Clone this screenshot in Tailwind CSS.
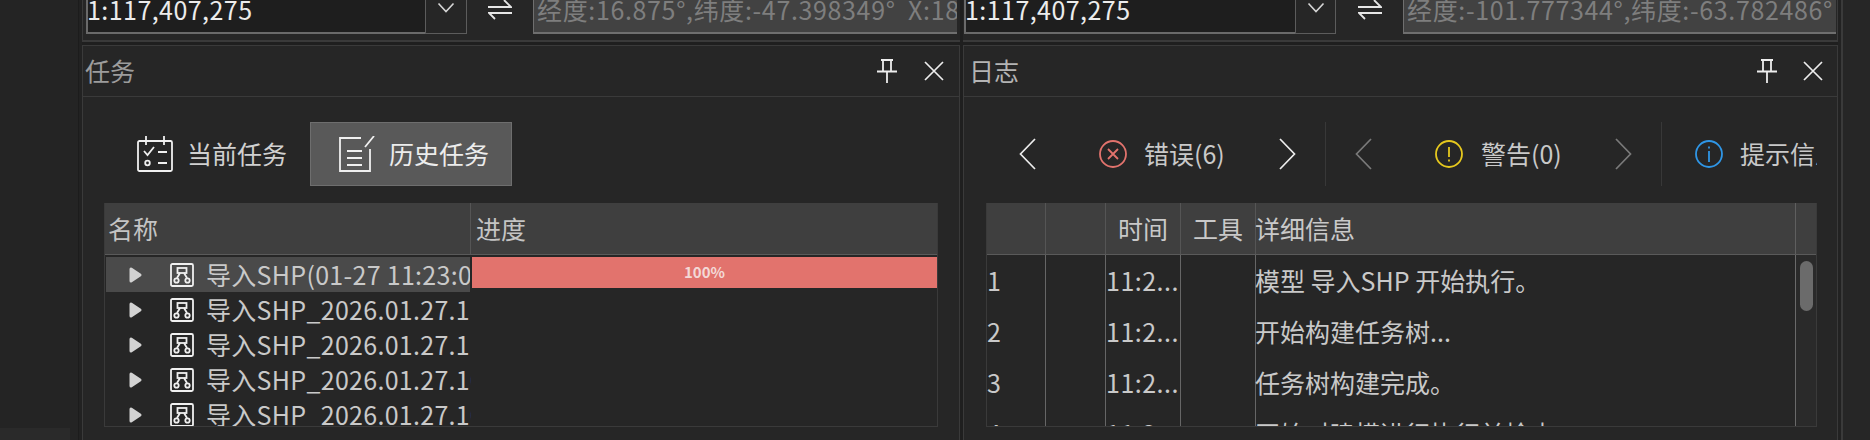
<!DOCTYPE html>
<html lang="zh">
<head>
<meta charset="utf-8">
<script src="https://cdn.jsdelivr.net/npm/@tailwindcss/browser@4"></script>
</head>
<body class="m-0 bg-[#262626]">
<div class="w-[1870px] h-[440px] flex overflow-hidden bg-[#262626] text-[25px] text-[#c9c9c9] font-['Noto_Sans_CJK_SC','Noto_Sans',sans-serif]">
  <!-- left gutter -->
  <div class="w-[79px] shrink-0 flex flex-col border-r border-[#1c1c1c] bg-[#242424]">
    <div class="flex-1"></div>
    <div class="h-[12px] w-[70px] bg-[#2a2a2a]"></div>
  </div>
  <div class="w-[3px] shrink-0 bg-[#222222]"></div>

  <!-- left column -->
  <div class="w-[878px] shrink-0 flex flex-col">
    <div class="h-[42px] shrink-0 flex items-start pl-[3px] border-b-2 border-l border-[#3a3a3a] bg-[#262626]">
      <div class="w-[339px] h-[34px] bg-[#1e1e1e] border-b-2 border-l-2 border-[#6a6a6a] overflow-hidden text-[#ececec] tracking-[0.45px]"><div class="leading-[24px] -mt-[3px] -ml-[1px]">1:117,407,275</div></div>
      <div class="w-[42px] h-[34px] border border-t-0 border-[#5c5c5c] flex justify-center pt-[2px]">
        <svg width="18" height="12" viewBox="0 0 18 12" fill="none" stroke="#d6d6d6" stroke-width="1.6"><path d="M1.5 1.5 9 9.5l7.5-8"/></svg>
      </div>
      <div class="w-[66px] h-[20px] flex justify-center">
        <svg width="24" height="20" viewBox="0 0 24 20" fill="none" stroke="#e6e6e6" stroke-width="1.8"><path d="M0 7h23L16 0M24 13H1l6 6"/></svg>
      </div>
      <div class="w-[424px] h-[34px] bg-[#424242] border-l border-b-2 border-[#6f6f6f] overflow-hidden pl-[3px] whitespace-pre text-[#7e7e7e] tracking-[0.65px]"><div class="leading-[24px] -mt-[3px]">经度:16.875°,纬度:-47.398349°  X:18</div></div>
    </div>
    <div class="h-[3px] shrink-0 bg-[#1f1f1f]"></div>
    <div class="flex-1 min-h-0 flex flex-col border-t border-l border-r border-[#3a3a3a]">
      <div class="h-[51px] shrink-0 flex items-center border-b border-[#3a3a3a] pl-[2px] text-[#9c9c9c]">
        <span class="leading-[30px] -mt-[2px]">任务</span>
        <div class="ml-auto flex items-center mr-[15px]">
          <svg width="20" height="24" viewBox="0 0 20 24" fill="none" stroke="#ededed" stroke-width="1.8"><path d="M4 1h12M6 1v11M14 1v11M0 12.500h20M10 12.500V24"/></svg>
          <svg class="ml-[27px]" width="20" height="20" viewBox="0 0 20 20" fill="none" stroke="#ededed" stroke-width="1.7"><path d="M1 1l18 18M19 1 1 19"/></svg>
        </div>
      </div>
      <!-- tabs -->
      <div class="h-[64px] shrink-0 mt-[25px] flex items-stretch">
        <div class="w-[227px] flex items-center pl-[54px]">
          <svg class="w-[36px] h-[36px] shrink-0" viewBox="0 0 36 36" fill="none" stroke="#f0f0f0" stroke-width="1.8"><rect x="1" y="5" width="34" height="30" rx="1.500"/><path d="M9 0v9M27 0v9M7 15l3.500 4L17 11M21 16h9M21 27h9"/><circle cx="10.500" cy="27" r="2.300"/></svg>
          <span class="ml-[14px] whitespace-nowrap text-[#d0d0d0]">当前任务</span>
        </div>
        <div class="w-[202px] bg-[#595959] border border-[#6e6e6e] flex items-center pl-[28px]">
          <svg class="w-[36px] h-[36px] shrink-0" viewBox="0 0 36 36" fill="none" stroke="#f0f0f0" stroke-width="1.8"><path d="M22 2H1v33h30V13M26 11 35 0M8 15h15M8 22h15M8 29h15"/></svg>
          <span class="ml-[14px] whitespace-nowrap text-[#ececec]">历史任务</span>
        </div>
      </div>
      <!-- task table -->
      <div class="ml-[21px] mt-[17px] w-[834px] h-[224px] shrink-0 flex flex-col border-l border-r border-b border-[#3a3a3a] overflow-hidden">
        <div class="h-[52px] shrink-0 flex bg-[#3f3f3f] border-b border-[#5a5a5a] text-[#c4c4c4]">
          <div class="w-[366px] flex items-center border-r border-[#555555] pl-[3px]">名称</div>
          <div class="flex-1 flex items-center pl-[5px]">进度</div>
        </div>
        <div class="flex-1 min-h-0 flex pt-[2px] overflow-hidden">
          <div class="w-[366px] shrink-0 flex flex-col overflow-hidden">
            <div class="h-[35px] shrink-0 ml-[1px] w-[364px] bg-[#4a4a4a] flex items-center pl-[23px] whitespace-nowrap overflow-hidden">
              <svg class="shrink-0" width="13" height="16" viewBox="0 0 13 16" fill="#d2d2d2" stroke="#d2d2d2" stroke-width="3" stroke-linejoin="round"><path d="M2 2v12l9-6z"/></svg>
              <svg class="shrink-0 ml-[28px]" width="24" height="24" viewBox="0 0 24 24" fill="none" stroke="#f0f0f0" stroke-width="1.800"><rect x="1" y="1" width="22" height="22" rx="1.500"/><rect x="7.500" y="5" width="9" height="5"/><path d="M10 10l-3 5M14 10l3 5"/><circle cx="6.500" cy="17.500" r="2.200"/><circle cx="17.500" cy="17.500" r="2.200"/></svg>
              <span class="ml-[12px] tracking-[0.3px]">导入SHP(01-27 11:23:05)</span>
            </div>
            <div class="h-[35px] shrink-0 ml-[1px] flex items-center pl-[23px] whitespace-nowrap overflow-hidden">
              <svg class="shrink-0" width="13" height="16" viewBox="0 0 13 16" fill="#d2d2d2" stroke="#d2d2d2" stroke-width="3" stroke-linejoin="round"><path d="M2 2v12l9-6z"/></svg>
              <svg class="shrink-0 ml-[28px]" width="24" height="24" viewBox="0 0 24 24" fill="none" stroke="#f0f0f0" stroke-width="1.800"><rect x="1" y="1" width="22" height="22" rx="1.500"/><rect x="7.500" y="5" width="9" height="5"/><path d="M10 10l-3 5M14 10l3 5"/><circle cx="6.500" cy="17.500" r="2.200"/><circle cx="17.500" cy="17.500" r="2.200"/></svg>
              <span class="ml-[12px] tracking-[0.3px]">导入SHP_2026.01.27.11:23:05</span>
            </div>
            <div class="h-[35px] shrink-0 ml-[1px] flex items-center pl-[23px] whitespace-nowrap overflow-hidden">
              <svg class="shrink-0" width="13" height="16" viewBox="0 0 13 16" fill="#d2d2d2" stroke="#d2d2d2" stroke-width="3" stroke-linejoin="round"><path d="M2 2v12l9-6z"/></svg>
              <svg class="shrink-0 ml-[28px]" width="24" height="24" viewBox="0 0 24 24" fill="none" stroke="#f0f0f0" stroke-width="1.800"><rect x="1" y="1" width="22" height="22" rx="1.500"/><rect x="7.500" y="5" width="9" height="5"/><path d="M10 10l-3 5M14 10l3 5"/><circle cx="6.500" cy="17.500" r="2.200"/><circle cx="17.500" cy="17.500" r="2.200"/></svg>
              <span class="ml-[12px] tracking-[0.3px]">导入SHP_2026.01.27.11:14:40</span>
            </div>
            <div class="h-[35px] shrink-0 ml-[1px] flex items-center pl-[23px] whitespace-nowrap overflow-hidden">
              <svg class="shrink-0" width="13" height="16" viewBox="0 0 13 16" fill="#d2d2d2" stroke="#d2d2d2" stroke-width="3" stroke-linejoin="round"><path d="M2 2v12l9-6z"/></svg>
              <svg class="shrink-0 ml-[28px]" width="24" height="24" viewBox="0 0 24 24" fill="none" stroke="#f0f0f0" stroke-width="1.800"><rect x="1" y="1" width="22" height="22" rx="1.500"/><rect x="7.500" y="5" width="9" height="5"/><path d="M10 10l-3 5M14 10l3 5"/><circle cx="6.500" cy="17.500" r="2.200"/><circle cx="17.500" cy="17.500" r="2.200"/></svg>
              <span class="ml-[12px] tracking-[0.3px]">导入SHP_2026.01.27.10:58:12</span>
            </div>
            <div class="h-[35px] shrink-0 ml-[1px] flex items-center pl-[23px] whitespace-nowrap overflow-hidden">
              <svg class="shrink-0" width="13" height="16" viewBox="0 0 13 16" fill="#d2d2d2" stroke="#d2d2d2" stroke-width="3" stroke-linejoin="round"><path d="M2 2v12l9-6z"/></svg>
              <svg class="shrink-0 ml-[28px]" width="24" height="24" viewBox="0 0 24 24" fill="none" stroke="#f0f0f0" stroke-width="1.800"><rect x="1" y="1" width="22" height="22" rx="1.500"/><rect x="7.500" y="5" width="9" height="5"/><path d="M10 10l-3 5M14 10l3 5"/><circle cx="6.500" cy="17.500" r="2.200"/><circle cx="17.500" cy="17.500" r="2.200"/></svg>
              <span class="ml-[12px] tracking-[0.3px]">导入SHP_2026.01.27.10:41:33</span>
            </div>
          </div>
          <div class="flex-1">
            <div class="h-[31px] ml-[1px] bg-[#e2736d] flex items-center justify-center text-[15px] font-bold text-[#f3d9d7]">100%</div>
          </div>
        </div>
      </div>
    </div>
  </div>

  <div class="w-[3px] shrink-0 bg-[#1f1f1f]"></div>

  <!-- right column -->
  <div class="w-[875px] shrink-0 flex flex-col">
    <div class="h-[42px] shrink-0 flex items-start pl-[1px] pr-[1px] border-b-2 border-r border-[#3a3a3a] bg-[#262626]">
      <div class="w-[331px] h-[34px] bg-[#1e1e1e] border-b-2 border-l-2 border-[#6a6a6a] overflow-hidden text-[#ececec] tracking-[0.45px]"><div class="leading-[24px] -mt-[3px] -ml-[1px]">1:117,407,275</div></div>
      <div class="w-[41px] h-[34px] border border-t-0 border-[#5c5c5c] flex justify-center pt-[2px]">
        <svg width="18" height="12" viewBox="0 0 18 12" fill="none" stroke="#d6d6d6" stroke-width="1.6"><path d="M1.500 1.500 9 9.500l7.500-8"/></svg>
      </div>
      <div class="w-[67px] h-[20px] flex justify-center">
        <svg width="24" height="20" viewBox="0 0 24 20" fill="none" stroke="#e6e6e6" stroke-width="1.8"><path d="M0 7h23L16 0M24 13H1l6 6"/></svg>
      </div>
      <div class="flex-1 min-w-0 h-[34px] bg-[#424242] border-l border-b-2 border-[#6f6f6f] overflow-hidden pl-[3px] whitespace-pre text-[#7e7e7e] tracking-[0.65px]"><div class="leading-[24px] -mt-[3px]">经度:-101.777344°,纬度:-63.782486°</div></div>
    </div>
    <div class="h-[3px] shrink-0 bg-[#1f1f1f]"></div>
    <div class="flex-1 min-h-0 flex flex-col border-t border-l border-r border-[#3a3a3a]">
      <div class="h-[51px] shrink-0 flex items-center border-b border-[#3a3a3a] pl-[5px] text-[#b4b4b4]">
        <span class="leading-[30px] -mt-[2px]">日志</span>
        <div class="ml-auto flex items-center mr-[14px]">
          <svg width="20" height="24" viewBox="0 0 20 24" fill="none" stroke="#ededed" stroke-width="1.8"><path d="M4 1h12M6 1v11M14 1v11M0 12.500h20M10 12.500V24"/></svg>
          <svg class="ml-[26px]" width="20" height="20" viewBox="0 0 20 20" fill="none" stroke="#ededed" stroke-width="1.7"><path d="M1 1l18 18M19 1 1 19"/></svg>
        </div>
      </div>
      <!-- log tabs -->
      <div class="h-[64px] w-[853px] shrink-0 mt-[25px] flex items-center overflow-hidden whitespace-nowrap">
        <svg class="ml-[55px] shrink-0" width="17" height="32" viewBox="0 0 17 32" fill="none" stroke="#ededed" stroke-width="1.7"><path d="M16 1 1.500 16 16 31"/></svg>
        <svg class="ml-[63px] shrink-0" width="28" height="28" viewBox="0 0 28 28" fill="none" stroke="#e2736d" stroke-width="1.800"><circle cx="14" cy="14" r="13"/><path d="m9 9 10 10M19 9 9 19"/></svg>
        <span class="ml-[17px] w-[81px] shrink-0">错误(6)</span>
        <svg class="ml-[54px] shrink-0" width="17" height="32" viewBox="0 0 17 32" fill="none" stroke="#ededed" stroke-width="1.7"><path d="M1 1l14.500 15L1 31"/></svg>
        <div class="ml-[29px] w-[1px] h-[64px] shrink-0 bg-[#383838]"></div>
        <svg class="ml-[29px] shrink-0" width="17" height="32" viewBox="0 0 17 32" fill="none" stroke="#7a7a7a" stroke-width="1.7"><path d="M16 1 1.500 16 16 31"/></svg>
        <svg class="ml-[63px] shrink-0" width="28" height="28" viewBox="0 0 28 28" fill="none" stroke="#e6c81e" stroke-width="1.800"><circle cx="14" cy="14" r="13"/><path d="M14 7v10M14 19.500v2"/></svg>
        <span class="ml-[18px] w-[80px] shrink-0">警告(0)</span>
        <svg class="ml-[54px] shrink-0" width="17" height="32" viewBox="0 0 17 32" fill="none" stroke="#7a7a7a" stroke-width="1.7"><path d="M1 1l14.500 15L1 31"/></svg>
        <div class="ml-[29px] w-[1px] h-[64px] shrink-0 bg-[#383838]"></div>
        <svg class="ml-[33px] shrink-0" width="28" height="28" viewBox="0 0 28 28" fill="none" stroke="#2f96e6" stroke-width="1.800"><circle cx="14" cy="14" r="13"/><path d="M14 6.500v2M14 11v11"/></svg>
        <span class="ml-[17px] shrink-0">提示信息</span>
      </div>
      <!-- log table -->
      <div class="ml-[22px] mt-[17px] w-[831px] h-[224px] shrink-0 flex flex-col border-l border-r border-b border-[#3a3a3a] overflow-hidden">
        <div class="h-[52px] shrink-0 grid grid-cols-[59px_60px_75px_75px_540px_1fr] bg-[#3f3f3f] border-b border-[#5a5a5a] text-[#c9c9c9]">
          <div class="border-r border-[#555555]"></div>
          <div class="border-r border-[#555555]"></div>
          <div class="border-r border-[#555555] flex items-center justify-center">时间</div>
          <div class="border-r border-[#555555] flex items-center justify-center">工具</div>
          <div class="border-r border-[#5f5f5f] flex items-center -ml-[1px]">详细信息</div>
          <div></div>
        </div>
        <div class="flex-1 min-h-0 flex overflow-hidden">
          <div class="w-[808px] shrink-0 flex flex-col overflow-hidden">
            <div class="h-[51px] shrink-0 grid grid-cols-[59px_60px_75px_75px_1fr] items-stretch whitespace-nowrap">
              <div class="border-r border-[#666666] flex items-center">1</div>
              <div class="border-r border-[#666666]"></div>
              <div class="border-r border-[#666666] flex items-center tracking-[0.5px]">11:2...</div>
              <div class="border-r border-[#666666]"></div>
              <div class="flex items-center -ml-[1px]">模型 导入SHP 开始执行。</div>
            </div>
            <div class="h-[51px] shrink-0 grid grid-cols-[59px_60px_75px_75px_1fr] items-stretch whitespace-nowrap">
              <div class="border-r border-[#666666] flex items-center">2</div>
              <div class="border-r border-[#666666]"></div>
              <div class="border-r border-[#666666] flex items-center tracking-[0.5px]">11:2...</div>
              <div class="border-r border-[#666666]"></div>
              <div class="flex items-center -ml-[1px]">开始构建任务树...</div>
            </div>
            <div class="h-[51px] shrink-0 grid grid-cols-[59px_60px_75px_75px_1fr] items-stretch whitespace-nowrap">
              <div class="border-r border-[#666666] flex items-center">3</div>
              <div class="border-r border-[#666666]"></div>
              <div class="border-r border-[#666666] flex items-center tracking-[0.5px]">11:2...</div>
              <div class="border-r border-[#666666]"></div>
              <div class="flex items-center -ml-[1px]">任务树构建完成。</div>
            </div>
            <div class="h-[51px] shrink-0 grid grid-cols-[59px_60px_75px_75px_1fr] items-stretch whitespace-nowrap">
              <div class="border-r border-[#666666] flex items-center">4</div>
              <div class="border-r border-[#666666]"></div>
              <div class="border-r border-[#666666] flex items-center tracking-[0.5px]">11:2...</div>
              <div class="border-r border-[#666666]"></div>
              <div class="flex items-center -ml-[1px]">开始对建模进行执行前检查。</div>
            </div>
          </div>
          <div class="flex-1 bg-[#2a2a2a] border-l border-[#6a6a6a] pt-[6px] flex justify-center">
            <div class="w-[13px] h-[50px] rounded-full bg-[#6b6b6b]"></div>
          </div>
        </div>
      </div>
    </div>
  </div>

  <!-- right gutter -->
  <div class="flex-1 flex">
    <div class="w-[4px] bg-[#222222] border-r border-[#3a3a3a]"></div>
    <div class="w-[1px] bg-[#3a3a3a]"></div>
    <div class="flex-1 bg-[#262626]"></div>
  </div>
</div>
</body>
</html>
